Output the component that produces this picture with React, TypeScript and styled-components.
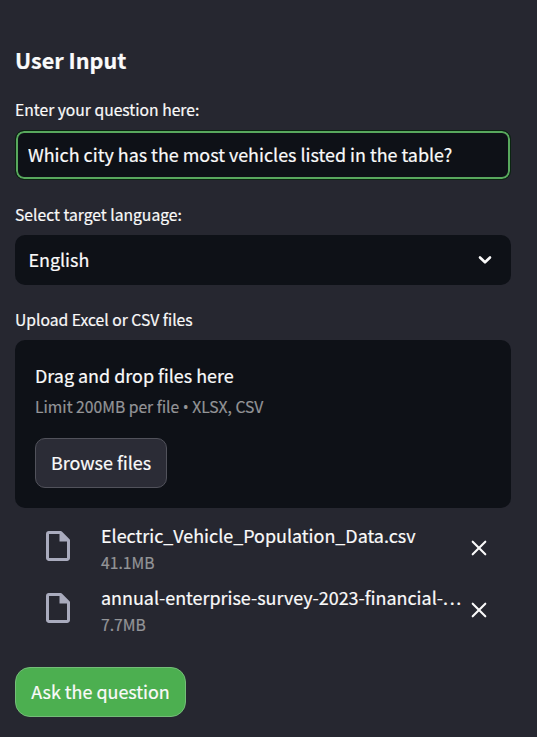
import React from "react";
import styled, { createGlobalStyle } from "styled-components";

const GlobalStyle = createGlobalStyle`
  * { box-sizing: border-box; }
  html, body { margin: 0; background: #262730; }
  body, button, input {
    font-family: "Noto Sans CJK SC", "Open Sans", sans-serif;
    color: #fafafa;
    -webkit-text-stroke: 0.2px currentColor;
  }
`;

const Sidebar = styled.main`
  display: flex;
  flex-direction: column;
  align-items: stretch;
  width: 537px;
  height: 737px;
  padding: 45px 26px 0 15px;
  overflow: hidden;
  background: #262730;
`;

const Heading = styled.h2`
  margin: 0 0 25px;
  font-size: 21.6px;
  line-height: 30px;
  font-weight: 700;
`;

const Field = styled.section`
  display: flex;
  flex-direction: column;
  margin-bottom: 25px;
`;

const Label = styled.label`
  height: 20px;
  margin-bottom: 10px;
  font-size: 15.68px;
  line-height: 20px;
`;

const TextInput = styled.input`
  width: 496px;
  height: 50px;
  padding: 0 12px 2px;
  border: 1px solid #0a2410;
  border-radius: 9px;
  outline: none;
  background: #0e1117;
  box-shadow: inset 0 0 0 2px #58a85d;
  font-size: 17.93px;
`;

const Select = styled.div`
  display: flex;
  align-items: center;
  justify-content: space-between;
  height: 50px;
  padding: 0 16px 0 13.4px;
  border-radius: 10px;
  background: #0e1117;
  font-size: 17.93px;
`;

const SelectValue = styled.span`
  padding-bottom: 2px;
`;

const DropZone = styled.div`
  display: flex;
  flex-direction: column;
  align-items: flex-start;
  height: 168px;
  padding: 20px 20px 20px;
  border-radius: 10px;
  background: #0e1117;
`;

const DropTitle = styled.div`
  height: 31px;
  font-size: 17.93px;
  line-height: 30px;
`;

const Small = styled.div<{ $height: number }>`
  height: ${(p) => p.$height}px;
  font-size: 15.68px;
  line-height: ${(p) => p.$height}px;
  color: #949598;
`;

const Bullet = styled.span`
  font-family: "Open Sans", sans-serif;
  line-height: 1;
`;

const Button = styled.button<{ $primary?: boolean }>`
  flex: none;
  align-self: flex-start;
  width: ${(p) => (p.$primary ? 171 : 132)}px;
  height: 50px;
  margin-top: ${(p) => (p.$primary ? 0 : 16)}px;
  padding: 0 0 3px;
  border: 1px solid ${(p) => (p.$primary ? "#74bd78" : "#51525b")};
  border-radius: ${(p) => (p.$primary ? 15 : 10)}px;
  background: ${(p) => (p.$primary ? "#4caf50" : "#2b2c36")};
  font-size: 17.93px;
  white-space: nowrap;
`;

const FileList = styled.ul`
  display: flex;
  flex-direction: column;
  gap: 12px;
  margin: 14px 0 33px;
  padding: 0 20px 0 30px;
  list-style: none;
`;

const FileRow = styled.li`
  display: grid;
  grid-template-columns: 56px 364.5px 26px;
  height: 50px;
`;

const FileName = styled.div`
  height: 28px;
  font-size: 17.93px;
  line-height: 26px;
  white-space: nowrap;
`;

const Dots = styled.span`
  letter-spacing: 1.7px;
`;

const Remove = styled.button`
  display: flex;
  align-items: center;
  justify-content: center;
  width: 26px;
  height: 50px;
  padding: 2px 0 0;
  border: 0;
  background: none;
`;

const FileIconBox = styled.div`
  display: flex;
  align-items: flex-start;
  padding-top: 8px;
`;

const FileIcon = () => (
  <svg width="26" height="32" viewBox="0 0 26 32" fill="none">
    <path d="M3.5 2.5H15.8L23.5 10.2V28a1.5 1.5 0 0 1-1.5 1.5H4A1.5 1.5 0 0 1 2.5 28V4A1.5 1.5 0 0 1 4 2.5Z" stroke="#a9abbd" strokeWidth="3" strokeLinejoin="round" />
    <path d="M14.5 2V11.5H24L15 2Z" fill="#a9abbd" />
  </svg>
);

const files = [
  { name: "Electric_Vehicle_Population_Data.csv", size: "41.1MB", cut: false },
  { name: "annual-enterprise-survey-2023-financial-", size: "7.7MB", cut: true },
];

export default function App() {
  return (
    <>
      <GlobalStyle />
      <Sidebar>
        <Heading>User Input</Heading>
        <Field>
          <Label htmlFor="question">Enter your question here:</Label>
          <TextInput id="question" defaultValue="Which city has the most vehicles listed in the table?" />
        </Field>
        <Field>
          <Label>Select target language:</Label>
          <Select>
            <SelectValue>English</SelectValue>
            <svg width="20" height="20" viewBox="0 0 20 20" fill="none" stroke="#fafafa" strokeWidth="2.6" strokeLinecap="round" strokeLinejoin="round">
              <path d="M5 7.5L10 12.3L15 7.5" />
            </svg>
          </Select>
        </Field>
        <Label>Upload Excel or CSV files</Label>
        <DropZone>
          <DropTitle>Drag and drop files here</DropTitle>
          <Small $height={31}>Limit 200MB per file <Bullet>•</Bullet> XLSX, CSV</Small>
          <Button>Browse files</Button>
        </DropZone>
        <FileList>
          {files.map((file) => (
            <FileRow key={file.name}>
              <FileIconBox><FileIcon /></FileIconBox>
              <div>
                <FileName>{file.name}{file.cut && <Dots>...</Dots>}</FileName>
                <Small $height={26}>{file.size}</Small>
              </div>
              <Remove aria-label={`Remove ${file.name}`}>
                <svg width="16" height="16" viewBox="0 0 16 16" stroke="#fafafa" strokeWidth="2.1" strokeLinecap="round">
                  <path d="M1.7 1.7L14.3 14.3M14.3 1.7L1.7 14.3" />
                </svg>
              </Remove>
            </FileRow>
          ))}
        </FileList>
        <Button $primary>Ask the question</Button>
      </Sidebar>
    </>
  );
}
